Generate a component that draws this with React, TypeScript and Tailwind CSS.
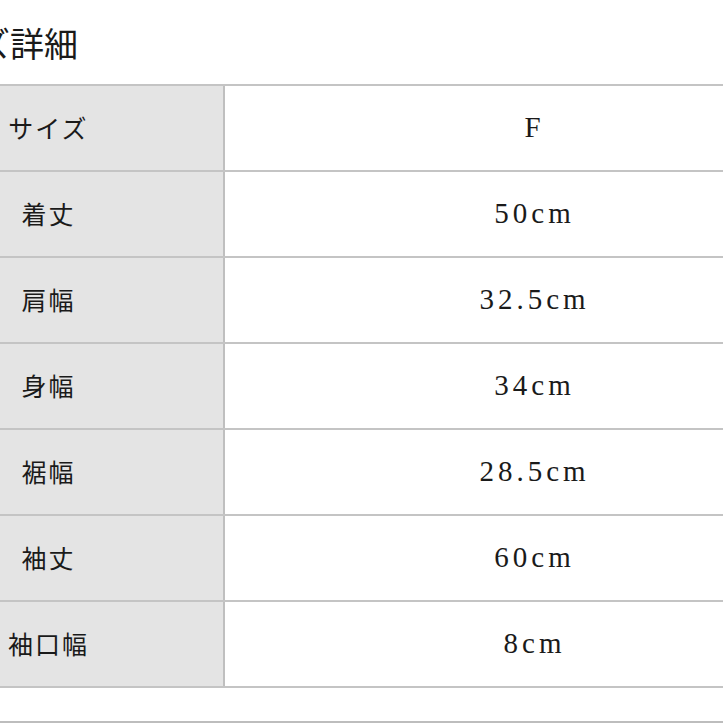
const rows = [
  { label: "サイズ", value: "F" },
  { label: "着丈", value: "50cm" },
  { label: "肩幅", value: "32.5cm" },
  { label: "身幅", value: "34cm" },
  { label: "裾幅", value: "28.5cm" },
  { label: "袖丈", value: "60cm" },
  { label: "袖口幅", value: "8cm" },
];

const App = () => {
  return (
    <div className="h-[723px] w-[723px] overflow-hidden bg-white text-[#1a1a1a]">
      {/* page is cropped on the left, so the block starts off-screen */}
      <div className="ml-[-128px] w-[968px]">
        <div className="h-[84px] pt-[17px] pl-[37px]">
          <h2 className="text-[34px] leading-[51px] font-normal [font-family:'Noto_Sans_CJK_JP',sans-serif]">
            サイズ詳細
          </h2>
        </div>

        <div className="border-b-2 border-[#c4c4c4]">
          {rows.map((row) => (
            <div key={row.label} className="flex h-[86px] border-t-2 border-[#c4c4c4]">
              <div className="flex w-[353px] items-center justify-center bg-[#e4e4e4] border-r-2 border-[#bfbfbf]">
                <span className="pl-[2px] text-[25px] tracking-[2px] [font-family:'Noto_Sans_CJK_JP',sans-serif]">
                  {row.label}
                </span>
              </div>
              <div className="flex flex-1 items-center justify-center">
                <span className="pl-[4px] text-[29px] tracking-[4px] [font-family:'Liberation_Serif',serif]">
                  {row.value}
                </span>
              </div>
            </div>
          ))}
        </div>

        <div className="mt-[33px] border-t-2 border-[#bdbdbd]" />
      </div>
    </div>
  );
};

export default App;
